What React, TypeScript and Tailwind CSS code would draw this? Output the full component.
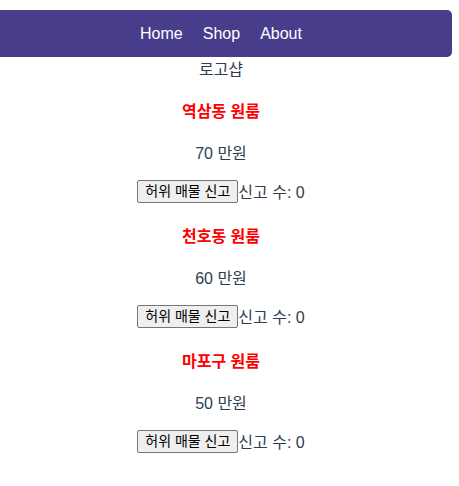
import React from 'react';

const rooms = [
  { name: '역삼동 원룸', price: 70 },
  { name: '천호동 원룸', price: 60 },
  { name: '마포구 원룸', price: 50 },
];

export default function App() {
  const [reports, setReports] = React.useState([0, 0, 0]);

  const report = (i: number) => {
    const next = [...reports];
    next[i] += 1;
    setReports(next);
  };

  return (
    <div className="w-[442px] text-center text-[#2c3e50] text-base font-['Liberation_Sans','Noto_Sans_CJK_KR',sans-serif]">
      {/* Menu */}
      <nav className="mt-[10px] w-[452px] h-[47px] pr-[10px] bg-[#483d8b] rounded-r-[5px] flex items-center justify-center">
        {['Home', 'Shop', 'About'].map((m) => (
          <a key={m} className="px-[10px] text-white leading-[18px]">
            {m}
          </a>
        ))}
      </nav>

      <div className="h-[21px] pt-[2px] leading-[21px]">로고샵</div>

      {rooms.map((room, i) => (
        <div key={room.name}>
          <h4 className="mt-[21px] mb-[21px] h-[21px] pt-[2px] leading-[21px] font-bold text-[#ff0000]">{room.name}</h4>
          <p className="mb-[18px] h-[21px] pt-[2px] leading-[21px]">{room.price} 만원</p>
          <div className="h-[23px] flex items-center justify-center">
            <button
              onClick={() => report(i)}
              className="h-[23px] px-[7px] bg-[#efefef] border border-[#767676] rounded-[2px] text-[14px] leading-[19px] text-black"
            >
              허위 매물 신고
            </button>
            <span className="pt-[2px] leading-[21px]">신고 수: {reports[i]}</span>
          </div>
        </div>
      ))}
    </div>
  );
}
